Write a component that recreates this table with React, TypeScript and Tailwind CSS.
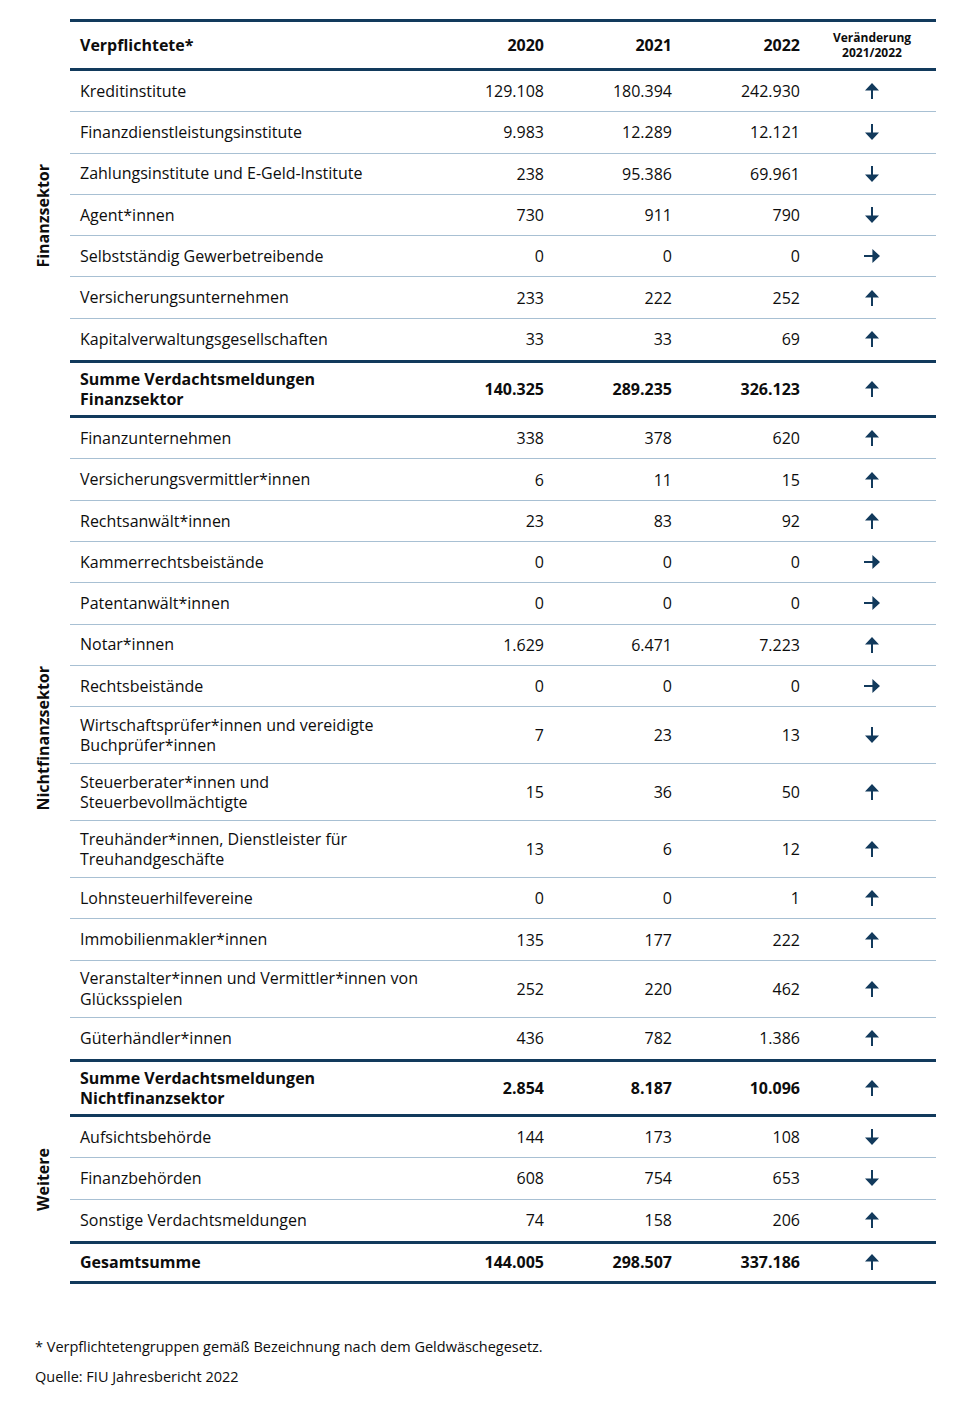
import React from 'react';

type Trend = 'up' | 'down' | 'right';

interface Row {
  label: string[];
  values: [string, string, string];
  trend: Trend;
}

const finanz: Row[] = [
  { label: ['Kreditinstitute'], values: ['129.108', '180.394', '242.930'], trend: 'up' },
  { label: ['Finanzdienstleistungsinstitute'], values: ['9.983', '12.289', '12.121'], trend: 'down' },
  { label: ['Zahlungsinstitute und E-Geld-Institute'], values: ['238', '95.386', '69.961'], trend: 'down' },
  { label: ['Agent*innen'], values: ['730', '911', '790'], trend: 'down' },
  { label: ['Selbstständig Gewerbetreibende'], values: ['0', '0', '0'], trend: 'right' },
  { label: ['Versicherungsunternehmen'], values: ['233', '222', '252'], trend: 'up' },
  { label: ['Kapitalverwaltungsgesellschaften'], values: ['33', '33', '69'], trend: 'up' },
];

const nichtfinanz: Row[] = [
  { label: ['Finanzunternehmen'], values: ['338', '378', '620'], trend: 'up' },
  { label: ['Versicherungsvermittler*innen'], values: ['6', '11', '15'], trend: 'up' },
  { label: ['Rechtsanwält*innen'], values: ['23', '83', '92'], trend: 'up' },
  { label: ['Kammerrechtsbeistände'], values: ['0', '0', '0'], trend: 'right' },
  { label: ['Patentanwält*innen'], values: ['0', '0', '0'], trend: 'right' },
  { label: ['Notar*innen'], values: ['1.629', '6.471', '7.223'], trend: 'up' },
  { label: ['Rechtsbeistände'], values: ['0', '0', '0'], trend: 'right' },
  { label: ['Wirtschaftsprüfer*innen und vereidigte', 'Buchprüfer*innen'], values: ['7', '23', '13'], trend: 'down' },
  { label: ['Steuerberater*innen und', 'Steuerbevollmächtigte'], values: ['15', '36', '50'], trend: 'up' },
  { label: ['Treuhänder*innen, Dienstleister für', 'Treuhandgeschäfte'], values: ['13', '6', '12'], trend: 'up' },
  { label: ['Lohnsteuerhilfevereine'], values: ['0', '0', '1'], trend: 'up' },
  { label: ['Immobilienmakler*innen'], values: ['135', '177', '222'], trend: 'up' },
  { label: ['Veranstalter*innen und Vermittler*innen von', 'Glücksspielen'], values: ['252', '220', '462'], trend: 'up' },
  { label: ['Güterhändler*innen'], values: ['436', '782', '1.386'], trend: 'up' },
];

const weitere: Row[] = [
  { label: ['Aufsichtsbehörde'], values: ['144', '173', '108'], trend: 'down' },
  { label: ['Finanzbehörden'], values: ['608', '754', '653'], trend: 'down' },
  { label: ['Sonstige Verdachtsmeldungen'], values: ['74', '158', '206'], trend: 'up' },
];

const gridCols = 'grid grid-cols-[346px_136px_128px_128px_128px] items-center';

function Arrow({ trend }: { trend: Trend }) {
  const rot = trend === 'up' ? '' : trend === 'down' ? 'rotate-180' : 'rotate-90';
  return (
    <svg viewBox="0 0 16 18" className={`h-[18px] w-[16px] ${rot}`}>
      <path d="M8 1 L15 8.6 L9 8.6 L9 17 L7 17 L7 8.6 L1 8.6 Z" fill="#123a5c" />
    </svg>
  );
}

function Label({ lines }: { lines: string[] }) {
  return (
    <div className="whitespace-nowrap pl-[10px] leading-[20.5px]">
      {lines.map((l) => (
        <div key={l}>{l}</div>
      ))}
    </div>
  );
}

function DataRow({ row, last }: { row: Row; last?: boolean }) {
  const tall = row.label.length > 1;
  return (
    <div
      className={`${gridCols} ${tall ? 'h-[57px]' : 'h-[41.3px]'} ${
        last ? '' : 'border-b border-[#a8c0d3]'
      }`}
    >
      <Label lines={row.label} />
      {row.values.map((v, i) => (
        <div key={i} className="pr-2 text-right">
          {v}
        </div>
      ))}
      <div className="flex justify-center">
        <Arrow trend={row.trend} />
      </div>
    </div>
  );
}

function Section({ title, rows }: { title: string; rows: Row[] }) {
  return (
    <div className="flex">
      <div className="flex w-[70px] items-center pl-[33px]">
        <div className="rotate-180 font-bold leading-5 [writing-mode:vertical-rl]">{title}</div>
      </div>
      <div>
        {rows.map((r, i) => (
          <DataRow key={r.label[0]} row={r} last={i === rows.length - 1} />
        ))}
      </div>
    </div>
  );
}

function SumRow({ row, single }: { row: Row; single?: boolean }) {
  return (
    <div className="flex">
      <div className="w-[70px]" />
      <div className="border-y-[3px] border-[#123a5c]">
        <div className={`${gridCols} ${single ? 'h-[37px]' : 'h-[52px]'} font-bold`}>
          <Label lines={row.label} />
          {row.values.map((v, i) => (
            <div key={i} className="pr-2 text-right">
              {v}
            </div>
          ))}
          <div className="flex justify-center">
            <Arrow trend={row.trend} />
          </div>
        </div>
      </div>
    </div>
  );
}

export default function App() {
  return (
    <div className="min-h-[1417px] w-[979px] bg-white pt-[19px] text-[16px] text-[#0d0d0d] [font-family:'Open_Sans',sans-serif]">
      {/* Header */}
      <div className="flex">
        <div className="w-[70px]" />
        <div className={`${gridCols} h-[52px] border-y-[3px] border-[#123a5c] font-bold`}>
          <div className="pl-[10px]">Verpflichtete*</div>
          <div className="pr-2 text-right">2020</div>
          <div className="pr-2 text-right">2021</div>
          <div className="pr-2 text-right">2022</div>
          <div className="text-center text-[12px] leading-[15px]">
            Veränderung
            <br />
            2021/2022
          </div>
        </div>
      </div>

      <Section title="Finanzsektor" rows={finanz} />
      <SumRow
        row={{ label: ['Summe Verdachtsmeldungen', 'Finanzsektor'], values: ['140.325', '289.235', '326.123'], trend: 'up' }}
      />
      <Section title="Nichtfinanzsektor" rows={nichtfinanz} />
      <SumRow
        row={{ label: ['Summe Verdachtsmeldungen', 'Nichtfinanzsektor'], values: ['2.854', '8.187', '10.096'], trend: 'up' }}
      />
      <Section title="Weitere" rows={weitere} />
      <SumRow
        single
        row={{ label: ['Gesamtsumme'], values: ['144.005', '298.507', '337.186'], trend: 'up' }}
      />

      {/* Footer */}
      <div className="mt-[52px] space-y-[9px] pl-[35px] text-[14.5px] leading-[21px]">
        <p>* Verpflichtetengruppen gemäß Bezeichnung nach dem Geldwäschegesetz.</p>
        <p>Quelle: FIU Jahresbericht 2022</p>
      </div>
    </div>
  );
}
